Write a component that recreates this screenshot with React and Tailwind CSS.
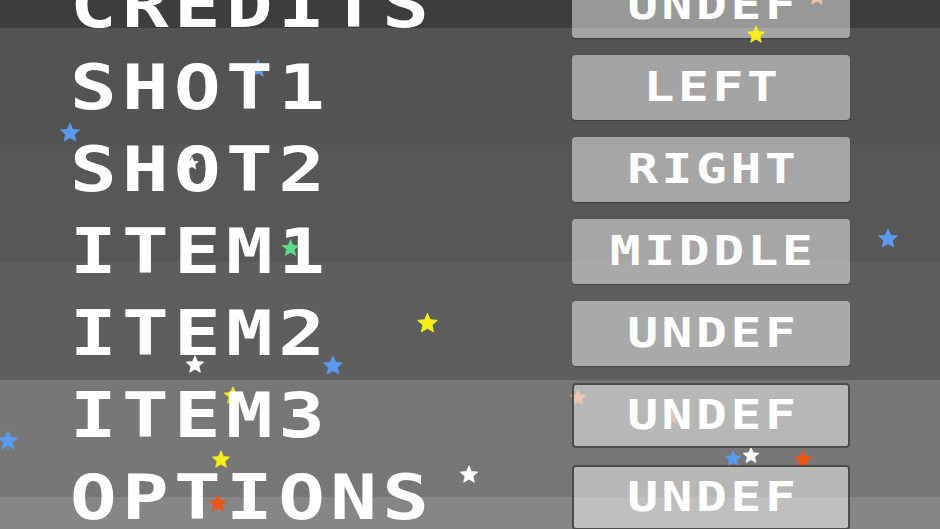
import React from "react";

const rows = [
  { label: "CREDITS", value: "UNDEF" },
  { label: "SHOT1", value: "LEFT" },
  { label: "SHOT2", value: "RIGHT" },
  { label: "ITEM1", value: "MIDDLE" },
  { label: "ITEM2", value: "UNDEF" },
  { label: "ITEM3", value: "UNDEF", active: true },
  { label: "OPTIONS", value: "UNDEF", active: true },
];

const BLUE = "#5a9bef";
const YELLOW = "#f4ee1a";
const WHITE = "#ffffff";
const GREEN = "#5fd98a";
const SALMON = "#f09a6c";
const RED = "#ea5616";

const stars = [
  { x: 817, y: -4, s: 22, c: SALMON, o: 0.85 },
  { x: 756, y: 34, s: 22, c: YELLOW, o: 1, front: true },
  { x: 258, y: 68, s: 22, c: BLUE, o: 1 },
  { x: 70, y: 132, s: 24, c: BLUE, o: 1 },
  { x: 192, y: 163, s: 16, c: WHITE, o: 1 },
  { x: 290, y: 247, s: 21, c: GREEN, o: 1 },
  { x: 888, y: 238, s: 24, c: BLUE, o: 1 },
  { x: 427, y: 322, s: 25, c: YELLOW, o: 1 },
  { x: 195, y: 364, s: 22, c: WHITE, o: 1 },
  { x: 333, y: 365, s: 24, c: BLUE, o: 1 },
  { x: 233, y: 395, s: 22, c: YELLOW, o: 1 },
  { x: 8, y: 440, s: 24, c: BLUE, o: 1 },
  { x: 578, y: 397, s: 20, c: SALMON, o: 0.85 },
  { x: 672, y: 417, s: 18, c: SALMON, o: 0.7 },
  { x: 221, y: 459, s: 22, c: YELLOW, o: 1 },
  { x: 469, y: 474, s: 22, c: WHITE, o: 1 },
  { x: 733, y: 458, s: 20, c: BLUE, o: 1 },
  { x: 751, y: 455, s: 20, c: WHITE, o: 1 },
  { x: 803, y: 459, s: 22, c: RED, o: 1 },
  { x: 218, y: 503, s: 22, c: RED, o: 1 },
];

const STAR_PATH =
  "M12 3 L14.7 9.28 L21.51 9.91 L16.37 14.42 L17.88 21.09 L12 17.6 L6.12 21.09 L7.63 14.42 L2.49 9.91 L9.3 9.28 Z";

function Star({ x, y, s, c, o }) {
  return (
    <svg
      className="absolute"
      style={{ left: x - s / 2, top: y - s / 2, width: s, height: s, opacity: o }}
      viewBox="0 0 24 24"
    >
      <path d={STAR_PATH} fill={c} stroke={c} strokeWidth="0.8" strokeLinejoin="round" />
    </svg>
  );
}

function Row({ label, value, active }) {
  return (
    <div className="flex h-[65px] items-center">
      <div className="w-[572px] shrink-0 pl-[70px]">
        <span className="inline-block origin-left scale-x-[1.25] font-['DejaVu_Sans_Mono',monospace] text-[62px] font-bold leading-none tracking-[4.3px] text-white">
          {label}
        </span>
      </div>
      <div
        className={
          active
            ? "flex h-[65px] w-[278px] shrink-0 items-center justify-center rounded-[4px] border-2 border-[#4c4c4c] bg-[rgba(255,255,255,0.47)]"
            : "flex h-[65px] w-[278px] shrink-0 items-center justify-center rounded-[4px] bg-[rgba(255,255,255,0.47)] shadow-[0_1px_1px_rgba(0,0,0,0.25)]"
        }
      >
        <span className="inline-block origin-center scale-x-[1.25] pl-[3px] font-['DejaVu_Sans_Mono',monospace] text-[41px] font-bold leading-none tracking-[2.9px] text-white">
          {value}
        </span>
      </div>
    </div>
  );
}

export default function App() {
  return (
    <div className="relative h-[529px] w-[940px] overflow-hidden bg-[linear-gradient(to_bottom,#3d3d3d_28px,#535353_28px,#535353_145px,#575757_145px,#575757_262px,#5e5e5e_262px,#5e5e5e_380px,#777777_380px,#777777_497px,#868686_497px)]">
      <div className="absolute inset-0">
        {stars.filter((st) => !st.front).map((st, i) => (
          <Star key={i} {...st} />
        ))}
      </div>
      <div className="relative z-10 -mt-[27px] flex flex-col gap-[17px]">
        {rows.map((r) => (
          <Row key={r.label} {...r} />
        ))}
      </div>
      <div className="absolute inset-0 z-20">
        {stars.filter((st) => st.front).map((st, i) => (
          <Star key={i} {...st} />
        ))}
      </div>
    </div>
  );
}
